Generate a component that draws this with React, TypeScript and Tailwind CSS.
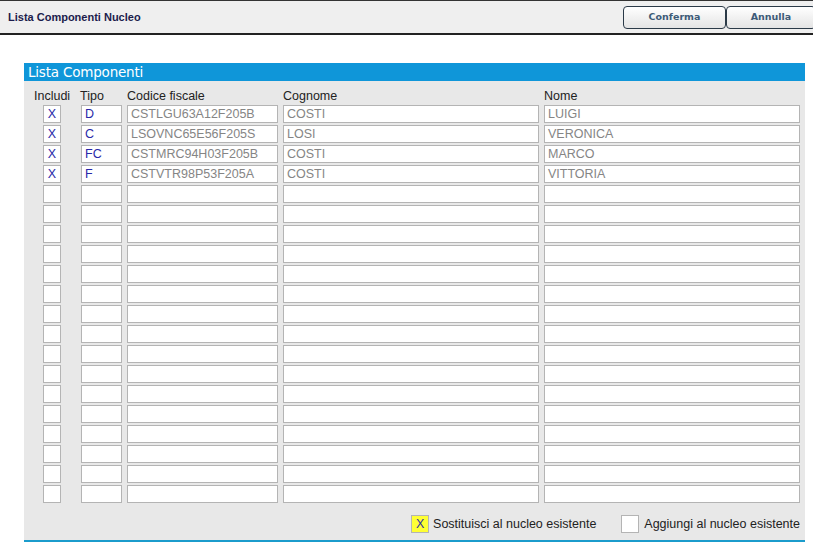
import React from "react";

type Row = { inc: string; tipo: string; cf: string; cognome: string; nome: string };

const filled: Row[] = [
  { inc: "X", tipo: "D", cf: "CSTLGU63A12F205B", cognome: "COSTI", nome: "LUIGI" },
  { inc: "X", tipo: "C", cf: "LSOVNC65E56F205S", cognome: "LOSI", nome: "VERONICA" },
  { inc: "X", tipo: "FC", cf: "CSTMRC94H03F205B", cognome: "COSTI", nome: "MARCO" },
  { inc: "X", tipo: "F", cf: "CSTVTR98P53F205A", cognome: "COSTI", nome: "VITTORIA" },
];

const empty: Row = { inc: "", tipo: "", cf: "", cognome: "", nome: "" };
const rows: Row[] = [...filled, ...Array.from({ length: 16 }, () => empty)];

const box =
  "h-[18px] border border-[#b4b4b4] bg-white px-[3px] text-[12.5px] leading-[16px] overflow-hidden whitespace-nowrap";

export default function App() {
  return (
    <div className="w-[813px] h-[544px] bg-white overflow-hidden font-['Liberation_Sans',Arial,sans-serif]">
      <div className="h-[35px] bg-[#efefef] border-t border-[#333] border-b-2 border-b-[#222] flex items-center justify-between">
        <span className="pl-[8px] pt-[1px] text-[11px] font-bold text-[#1c1c4c]">
          Lista Componenti Nucleo
        </span>
        <div className="flex self-start pt-[5px] mr-[-3px]">
          <button className="w-[103px] h-[23px] rounded-[4px] border border-[#2b3a48] bg-gradient-to-b from-white to-[#e4e4e4] text-[9.5px] font-bold text-[#3d5b78] font-['DejaVu_Sans',sans-serif]">
            Conferma
          </button>
          <button className="w-[90px] h-[23px] rounded-[4px] border border-[#2b3a48] bg-gradient-to-b from-white to-[#e4e4e4] text-[9.5px] font-bold text-[#3d5b78] font-['DejaVu_Sans',sans-serif]">
            Annulla
          </button>
        </div>
      </div>

      <div className="ml-[24px] mt-[28px] w-[781px] h-[479px] bg-[#e8e8e8] border-b-2 border-b-[#1b9ccc]">
        <div className="h-[18px] bg-[#0f96d9] text-white text-[13.5px] leading-[18px] pl-[4px] font-['DejaVu_Sans',sans-serif] tracking-[-0.2px]">
          Lista Componenti
        </div>
        <div className="flex pt-[8px] text-[12.5px] leading-[14px] text-[#222]">
          <span className="ml-[10px] w-[46px]">Includi</span>
          <span className="w-[47px]">Tipo</span>
          <span className="w-[156px]">Codice fiscale</span>
          <span className="w-[261px]">Cognome</span>
          <span>Nome</span>
        </div>
        <div className="flex flex-col gap-[2px] pt-[2px]">
          {rows.map((r, i) => (
            <div key={i} className="flex">
              <div className={`${box} ml-[19px] w-[18px] text-center px-0 text-[#2828a8]`}>{r.inc}</div>
              <div className={`${box} ml-[20px] w-[41px] text-[#2828a8]`}>{r.tipo}</div>
              <div className={`${box} ml-[5px] w-[151px] text-[#858585]`}>{r.cf}</div>
              <div className={`${box} ml-[5px] w-[256px] text-[#858585]`}>{r.cognome}</div>
              <div className={`${box} ml-[5px] w-[256px] text-[#858585]`}>{r.nome}</div>
            </div>
          ))}
        </div>
        <div className="flex items-center justify-end pt-[12px] pr-[5px] text-[12.5px] text-[#222]">
          <div className="w-[18px] h-[18px] border border-[#b4b4b4] bg-[#ffff33] text-[#3030a0] text-center leading-[16px]">
            X
          </div>
          <span className="ml-[4px]">Sostituisci al nucleo esistente</span>
          <div className="ml-[25px] w-[18px] h-[18px] border border-[#b4b4b4] bg-white" />
          <span className="ml-[5px]">Aggiungi al nucleo esistente</span>
        </div>
      </div>
    </div>
  );
}
